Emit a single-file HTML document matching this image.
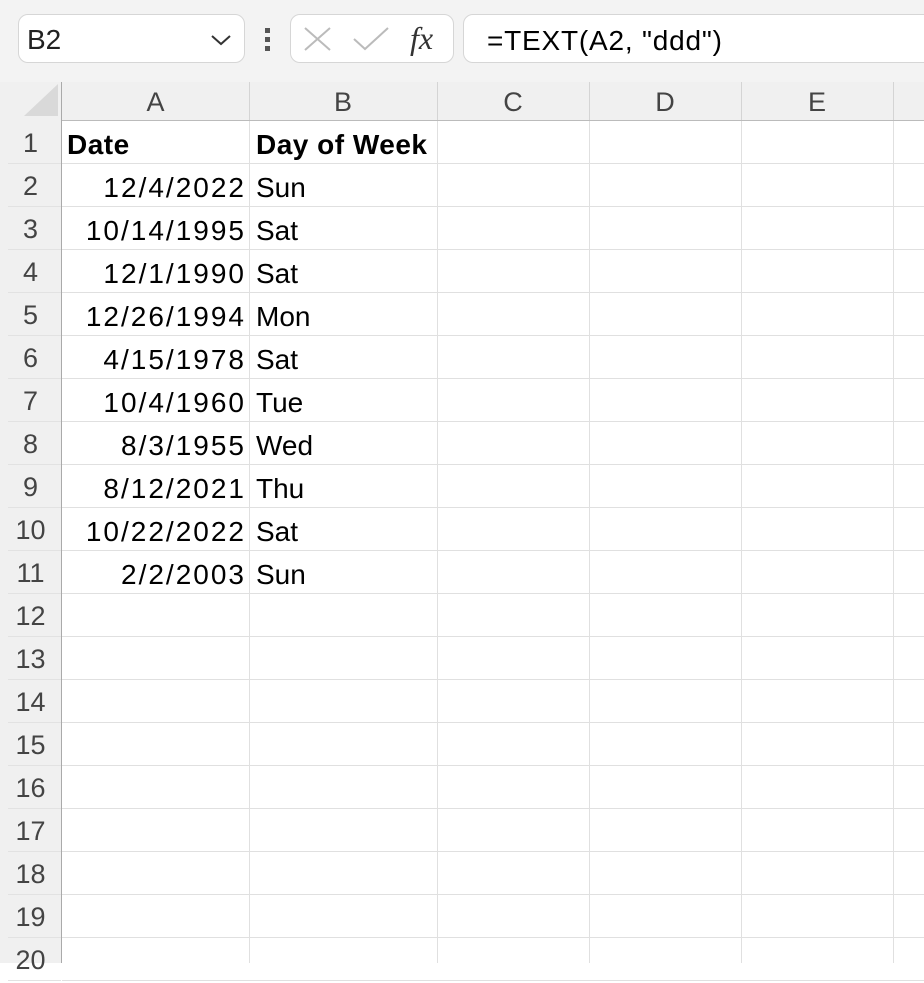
<!DOCTYPE html>
<html><head><style>
body{margin:0;width:924px;height:963px;overflow:hidden;background:#fff;font-family:"Liberation Sans",sans-serif;position:relative}
.top{position:absolute;left:0;top:0;width:924px;height:82px;background:#f3f3f3}
.box{position:absolute;background:#fff;border:1px solid #d6d6d6;border-radius:10px;box-sizing:border-box}
.t{position:absolute;font-size:28px;color:#000;white-space:nowrap;line-height:43px}
.hd{position:absolute;font-size:27px;color:#444;text-align:center;line-height:38px}
.rh{position:absolute;left:0;width:61px;font-size:27px;color:#444;text-align:center;line-height:45px;height:43px}
</style></head><body>
<div class="top"></div>
<div class="box" style="left:18px;top:14px;width:227px;height:49px"></div>
<div class="t" style="left:27px;top:18px;color:#222">B2</div>
<svg style="position:absolute;left:210px;top:34px" width="22" height="12"><path d="M2 2 L11 10 L20 2" fill="none" stroke="#333" stroke-width="2"/></svg>
<div style="position:absolute;left:265px;top:28px;width:5px;height:5px;background:#555"></div>
<div style="position:absolute;left:265px;top:37px;width:5px;height:5px;background:#555"></div>
<div style="position:absolute;left:265px;top:46px;width:5px;height:5px;background:#555"></div>
<div class="box" style="left:290px;top:14px;width:164px;height:49px"></div>
<svg style="position:absolute;left:303px;top:26px" width="30" height="26"><path d="M2 2 L27 24 M27 2 L2 24" stroke="#bbb" stroke-width="2"/></svg>
<svg style="position:absolute;left:352px;top:26px" width="38" height="26"><path d="M2 13 L13 23 L36 2" fill="none" stroke="#bbb" stroke-width="2"/></svg>
<div class="t" style="left:410px;top:17px;font-family:'Liberation Serif',serif;font-style:italic;font-size:32px;color:#333">fx</div>
<div class="box" style="left:463px;top:14px;width:480px;height:49px"></div>
<div class="t" style="left:487px;top:19px;letter-spacing:0.8px">=TEXT(A2, "ddd")</div>
<div style="position:absolute;left:0;top:82px;width:924px;height:39px;background:#f0f0f0;border-bottom:1px solid #bbb;box-sizing:border-box"></div>
<div style="position:absolute;left:0;top:82px;width:61px;height:881px;background:#f0f0f0;border-right:1px solid #aaa"></div>
<svg style="position:absolute;left:22px;top:82px" width="38" height="36"><path d="M36 2 L36 34 L2 34 Z" fill="#d9d9d9"/></svg>
<div id="g"></div>
<script>
var h='',cols=[62,249,437,589,741,893],nm=['A','B','C','D','E',''];
for(var i=0;i<5;i++){h+='<div class="hd" style="left:'+cols[i]+'px;top:83px;width:'+(cols[i+1]-cols[i])+'px">'+nm[i]+'</div>';}
for(var i=1;i<6;i++){h+='<div style="position:absolute;left:'+cols[i]+'px;top:82px;width:1px;height:38px;background:#d4d4d4"></div><div style="position:absolute;left:'+cols[i]+'px;top:121px;width:1px;height:842px;background:#e0e0e0"></div>';}
for(var r=1;r<=20;r++){var y=121+(r-1)*43;h+='<div class="rh" style="top:'+y+'px">'+r+'</div>';
h+='<div style="position:absolute;left:62px;top:'+(y+42)+'px;width:862px;height:1px;background:#e0e0e0"></div><div style="position:absolute;left:8px;top:'+(y+42)+'px;width:53px;height:1px;background:#e2e2e2"></div>';}
var d=[['12/4/2022','Sun'],['10/14/1995','Sat'],['12/1/1990','Sat'],['12/26/1994','Mon'],['4/15/1978','Sat'],['10/4/1960','Tue'],['8/3/1955','Wed'],['8/12/2021','Thu'],['10/22/2022','Sat'],['2/2/2003','Sun']];
h+='<div class="t" style="left:67px;top:123px;font-weight:bold;letter-spacing:0.5px">Date</div><div class="t" style="left:256px;top:123px;font-weight:bold;letter-spacing:0.5px">Day of Week</div>';
for(var k=0;k<d.length;k++){var y=121+(k+1)*43;h+='<div class="t" style="right:'+(924-246)+'px;top:'+(y+2)+'px;letter-spacing:2px">'+d[k][0]+'</div><div class="t" style="left:256px;top:'+(y+2)+'px">'+d[k][1]+'</div>';}
document.getElementById('g').innerHTML=h;
</script>
</body></html>
